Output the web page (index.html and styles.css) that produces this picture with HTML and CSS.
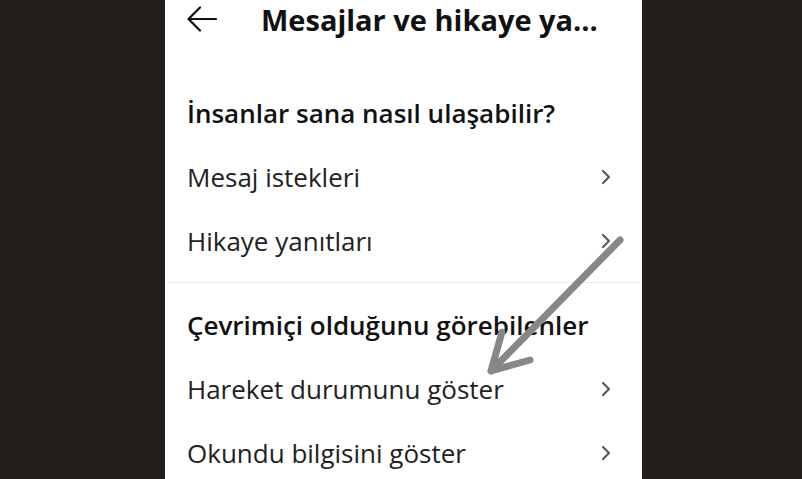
FILE: index.html
```html
<!DOCTYPE html>
<html lang="tr">
<head>
<meta charset="utf-8">
<link rel="stylesheet" href="styles.css">
</head>
<body>
<div class="panel">
  <header class="topbar">
    <svg class="back" width="30" height="26" viewBox="0 0 30 26"><path d="M29 13H2M13 1.5L1.5 13L13 24.5" fill="none" stroke="#111" stroke-width="2.2" stroke-linecap="round" stroke-linejoin="round"/></svg>
    <h1 class="title">Mesajlar ve hikaye ya...</h1>
  </header>
  <section class="group">
    <h2 class="row head">İnsanlar sana nasıl ulaşabilir?</h2>
    <div class="row item"><span>Mesaj istekleri</span><svg class="chev" width="10" height="16" viewBox="0 0 10 16"><path d="M2 2L8 8L2 14" fill="none" stroke="#5a5a5a" stroke-width="2.2" stroke-linecap="round" stroke-linejoin="round"/></svg></div>
    <div class="row item"><span>Hikaye yanıtları</span><svg class="chev" width="10" height="16" viewBox="0 0 10 16"><path d="M2 2L8 8L2 14" fill="none" stroke="#5a5a5a" stroke-width="2.2" stroke-linecap="round" stroke-linejoin="round"/></svg></div>
  </section>
  <hr class="divider">
  <section class="group second">
    <h2 class="row head">Çevrimiçi olduğunu görebilenler</h2>
    <div class="row item"><span>Hareket durumunu göster</span><svg class="chev" width="10" height="16" viewBox="0 0 10 16"><path d="M2 2L8 8L2 14" fill="none" stroke="#5a5a5a" stroke-width="2.2" stroke-linecap="round" stroke-linejoin="round"/></svg></div>
    <div class="row item"><span>Okundu bilgisini göster</span><svg class="chev" width="10" height="16" viewBox="0 0 10 16"><path d="M2 2L8 8L2 14" fill="none" stroke="#5a5a5a" stroke-width="2.2" stroke-linecap="round" stroke-linejoin="round"/></svg></div>
  </section>
</div>
<svg class="annot" width="802" height="479" viewBox="0 0 802 479"><path d="M620 240L491 371M502 332L491 371L530 360" fill="none" stroke="#878787" stroke-width="7" stroke-linecap="round" stroke-linejoin="round"/></svg>
</body>
</html>
```
FILE: styles.css
```css
html, body {
  margin: 0;
  padding: 0;
  height: 100%;
  overflow: hidden;
}
body {
  background: #221f1a;
  font-family: "Open Sans", "Noto Sans", sans-serif;
  color: #1a1a1a;
  position: relative;
}
.panel {
  margin-left: 165px;
  width: 477px;
  height: 479px;
  background: #fff;
}
.topbar {
  height: 38px;
  display: flex;
  align-items: center;
  padding-left: 22px;
  margin-bottom: 43px;
}
.back {
  display: block;
  flex: none;
}
.title {
  margin: 0 0 0 44px;
  font-size: 29px;
  font-weight: 700;
  color: #111;
  white-space: nowrap;
}
.group {
  padding: 0 31px 0 22px;
}
.row {
  height: 64px;
  display: flex;
  align-items: center;
  justify-content: space-between;
  margin: 0;
}
.head {
  font-size: 26px;
  font-weight: 600;
  color: #111;
}
.item {
  font-size: 26px;
  font-weight: 400;
  color: #222;
}
.chev {
  display: block;
}
.divider {
  border: 0;
  height: 1px;
  background: #ececec;
  margin: 9px 2px 10px 3px;
}
.annot {
  position: absolute;
  left: 0;
  top: 0;
  pointer-events: none;
}
```
